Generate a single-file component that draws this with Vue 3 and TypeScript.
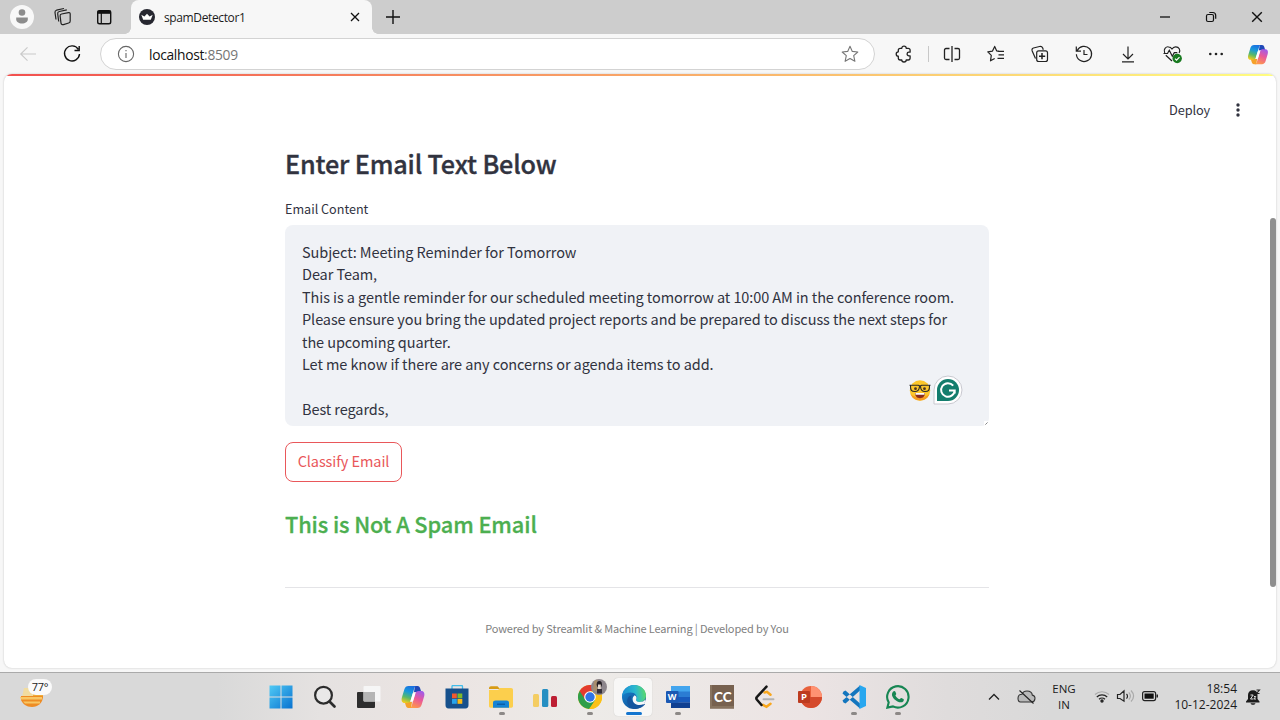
<script setup lang="ts">
const tabTitle: string = 'spamDetector1'
const host: string = 'localhost'
const port: string = ':8509'

const emailLines: string[] = [
  'Subject: Meeting Reminder for Tomorrow',
  'Dear Team,',
  'This is a gentle reminder for our scheduled meeting tomorrow at 10:00 AM in the conference room.',
  'Please ensure you bring the updated project reports and be prepared to discuss the next steps for',
  'the upcoming quarter.',
  'Let me know if there are any concerns or agenda items to add.',
  '\u00a0',
  'Best regards,',
]
</script>

<template>
  <div class="screen">
    <svg class="defs" aria-hidden="true">
      <defs>
        <linearGradient id="cpA" x1="0.6" y1="0" x2="0.3" y2="1">
          <stop offset="0" stop-color="#1b6fe0" /><stop offset="0.35" stop-color="#1799dc" />
          <stop offset="0.68" stop-color="#58b96a" /><stop offset="1" stop-color="#f2cc1c" />
        </linearGradient>
        <linearGradient id="cpB" x1="0.7" y1="0" x2="0.3" y2="1">
          <stop offset="0" stop-color="#a25ae8" /><stop offset="0.45" stop-color="#ea5899" />
          <stop offset="1" stop-color="#ff9a4a" />
        </linearGradient>
        <symbol id="copilot" viewBox="0 0 24 24">
          <path d="M14 1h2.600c1.500 0 2.200.9 2.600 2.400L20.300 7H13z" fill="#2049b8" />
          <path d="M10 23H7.400c-1.500 0-2.200-.9-2.600-2.400L3.700 17H11z" fill="#f5a12a" />
          <path d="M7.500 1h8c-1.300.2-1.900 1.200-2.300 2.600L9.600 15.500C9 17.300 7.900 18 6.300 18H3.600C1 18 0 15.500.9 12.500l2.400-8C4 2 5.400 1 7.500 1z" fill="url(#cpA)" />
          <path d="M16.500 23h-8c1.300-.2 1.900-1.200 2.300-2.600l3.600-11.900C15 6.700 16.100 6 17.700 6h2.700C23 6 24 8.500 23.100 11.500l-2.400 8C20 22 18.600 23 16.500 23z" fill="url(#cpB)" />
          <path d="M11.800 8.300h2.600l-2.500 7.900H9.400z" fill="#fff" />
        </symbol>
      </defs>
    </svg>

    <header class="tabbar">
      <div class="tab-tools">
        <svg class="i24" viewBox="0 0 24 24"><circle cx="12" cy="12" r="12" fill="#f8f8f8" /><circle cx="12" cy="7.500" r="3.300" fill="#8c8c8c" /><path d="M6.200 12.600h11.600v1.600c0 2.600-2.400 4.300-5.800 4.300s-5.800-1.700-5.800-4.300z" fill="#8c8c8c" /></svg>
        <svg class="i24" viewBox="0 0 24 24" fill="none" stroke="#222" stroke-width="1.200" stroke-linejoin="round"><path d="m10.600 9 6.800-1.400c1-.2 1.800.4 1.800 1.400v7c0 1-.5 1.700-1.500 2l-5.200 1.600c-1.200.3-2.300-.3-2.500-1.500l-.9-7.200c-.1-1 .5-1.700 1.500-1.900z" /><path d="m7.700 16.500-1-7.600C6.500 7.600 7.100 6.800 8.300 6.500l7.500-1.600" /><path d="m5 14.500-1-7c-.1-1.200.5-2 1.500-2.300l7.500-1.700" /></svg>
        <svg class="i24" viewBox="0 0 24 24" fill="none" stroke="#111" stroke-width="1.400"><rect x="5.700" y="5.700" width="13" height="13" rx="1.800" /><path d="M5.500 7.200h13.500" stroke-width="3.200" /><path d="M9.300 8v10.500" stroke-width="1.200" /></svg>
      </div>
      <div class="tab">
        <svg class="favicon" viewBox="0 0 16 16"><circle cx="8" cy="8" r="8" fill="#262730" /><path d="M2.300 5.800 5.400 7.600 8 4.700l2.600 2.900 3.100-1.800-1.900 4.900H4.200z" fill="#fff" /></svg>
        <span class="tab-title">{{ tabTitle }}</span>
        <svg class="close" viewBox="0 0 10 10" stroke="#111" stroke-width="1.300"><path d="m1 1 8 8M9 1 1 9" /></svg>
      </div>
      <svg class="plus" viewBox="0 0 14 14" stroke="#111" stroke-width="1.400"><path d="M7 0v14M0 7h14" /></svg>
      <div class="win-buttons">
        <svg class="i24" viewBox="0 0 24 24" stroke="#111" stroke-width="1.300"><path d="M7 12h10" /></svg>
        <svg class="i24" viewBox="0 0 24 24" fill="none" stroke="#111" stroke-width="1.200"><rect x="7.500" y="9.500" width="7" height="7" rx="1.500" /><path d="M10.300 7.500h3.400a3 3 0 0 1 3 3v3.300" /></svg>
        <svg class="i24" viewBox="0 0 24 24" stroke="#111" stroke-width="1.400"><path d="m7.200 7.200 9.600 9.600M16.800 7.200l-9.600 9.600" /></svg>
      </div>
    </header>

    <nav class="toolbar">
      <div class="cell"><svg class="i24" viewBox="0 0 24 24" fill="none" stroke="#c9c9c9" stroke-width="1.100"><path d="M20 12H4.500M11.500 5.300 4.700 12l6.800 6.700" /></svg></div>
      <div class="cell"><svg class="i24" viewBox="0 0 24 24" fill="none" stroke="#111" stroke-width="1.400"><path d="M18.300 7.300A7.500 7.500 0 1 0 19.500 12M19.200 4v4.500h-4.700" /></svg></div>
      <div class="address">
        <svg class="i24" viewBox="0 0 24 24" fill="none" stroke="#666" stroke-width="1.100"><circle cx="12" cy="12" r="7.600" /><path d="M12 11v5M12 8v1.300" /></svg>
        <span class="url"><b>{{ host }}</b>{{ port }}</span>
        <svg class="i24 fav" viewBox="0 0 24 24" fill="none" stroke="#777" stroke-width="1.100" stroke-linejoin="round"><path d="m12 4.300 2.300 5.100 5.500.6-4.100 3.700 1.200 5.600-4.900-2.800-4.900 2.800 1.200-5.600-4.100-3.700 5.500-.6z" /></svg>
      </div>
      <div class="cell"><svg class="i24" viewBox="0 0 24 24" fill="none" stroke="#222" stroke-width="1.300" stroke-linejoin="round"><path d="M8.200 6.300h1.600c0-1.400.9-2.100 2.200-2.100s2.200.7 2.200 2.100h2c1.200 0 1.900.7 1.900 1.900v2h-1.200a1.800 1.800 0 0 0 0 3.600h1.200v2.300c0 1.200-.7 1.900-1.900 1.900h-2c0 1.300-.9 2-2.200 2s-2.200-.7-2.200-2H8.200c-1.200 0-1.900-.7-1.900-1.900v-1.900C4.900 14.200 4.200 13.300 4.200 12s.7-2.200 2.100-2.200V8.200c0-1.200.7-1.900 1.900-1.900z" /></svg></div>
      <span class="divider"></span>
      <div class="cell"><svg class="i24" viewBox="0 0 24 24" fill="none" stroke="#222" stroke-width="1.300"><path d="M9.500 6.500H6a1.500 1.500 0 0 0-1.500 1.500v8A1.500 1.500 0 0 0 6 17.500h3.500M14.500 6.500H18a1.500 1.500 0 0 1 1.500 1.500v8a1.500 1.500 0 0 1-1.500 1.500h-3.500M12 4v16" /></svg></div>
      <div class="cell"><svg class="i24 stars" viewBox="0 0 24 24" fill="none" stroke="#222" stroke-width="1.200" stroke-linejoin="round"><path d="m14 9.200-2.300-.3-2-4.500-2.200 4.700-4.700.7 3.500 3.500-.8 5.500 4.200-2.400M12.500 9.300h6.500M13.500 12.800H19M12.500 16.300H19" /></svg></div>
      <div class="cell"><svg class="i24" viewBox="0 0 24 24" fill="none" stroke="#222" stroke-width="1.200"><path d="M7.500 16.500 4.200 9c-.6-1.500 0-2.500 1.300-3l6-1.500c1.500-.4 2.600.2 3.200 1.500l.6 1.700" /><rect x="8.700" y="8.800" width="10.800" height="10.700" rx="2" /><path d="M14 11v6.300M11 14.200h6.200" stroke-width="1.500" /></svg></div>
      <div class="cell"><svg class="i24" viewBox="0 0 24 24" fill="none" stroke="#222" stroke-width="1.200"><path d="M5.200 8.500a7.600 7.600 0 1 1-.8 3.700M4.300 4.500v4.700H9M12 8v4.500h3.500" /></svg></div>
      <div class="cell"><svg class="i24" viewBox="0 0 24 24" fill="none" stroke="#222" stroke-width="1.200"><path d="M12 4.500v12M7 12l5 5 5-5M6 19.800h12" /></svg></div>
      <div class="cell"><svg class="i24" viewBox="0 0 24 24" fill="none" stroke="#222" stroke-width="1.200"><path d="M12 19 5.800 13.200M4.700 11C3 7 6 4.500 8.500 4.800c1.800.1 2.800 1.100 3.500 2.200.8-1.200 1.800-2.100 3.500-2.200 3.500-.2 5.300 3.300 3.600 6.200M3.500 11.500h4l1.800-3.300 3 6 2-3.500h3" /><circle cx="17.200" cy="16.500" r="4.700" fill="#197a20" stroke="none" /><path d="m15 16.600 1.500 1.500 3-3" stroke="#fff" /></svg></div>
      <div class="cell"><svg class="i24" viewBox="0 0 24 24" fill="#222"><circle cx="6.300" cy="12" r="1.300" /><circle cx="12" cy="12" r="1.300" /><circle cx="17.700" cy="12" r="1.300" /></svg></div>
      <div class="cell cop"><svg class="copilot-top"><use href="#copilot" /></svg></div>
    </nav>

    <main class="viewport">
      <div class="decoration"></div>
      <div class="app-header">
        <span>Deploy</span>
        <svg class="kebab" viewBox="0 0 4 14" fill="#31333f"><circle cx="2" cy="2" r="1.700" /><circle cx="2" cy="7" r="1.700" /><circle cx="2" cy="12" r="1.700" /></svg>
      </div>
      <div class="content">
        <h2 class="heading">Enter Email Text Below</h2>
        <div class="label">Email Content</div>
        <div class="textarea">
          <div v-for="(line, i) in emailLines" :key="i" class="line">{{ line }}</div>
          <div class="extension">
            <svg class="emoji" viewBox="0 0 22 22"><circle cx="11" cy="11.500" r="10.200" fill="#fcc62b" /><path d="M1.500 15a10.200 10.200 0 0 0 19 0 15 15 0 0 1-19 0z" fill="#f59b22" /><circle cx="6.500" cy="9.700" r="1.400" fill="#4b3520" /><circle cx="15.500" cy="9.700" r="1.400" fill="#4b3520" /><path d="M.5 6.300h8.800l1.700.8 1.700-.8h8.800M1.500 6.500c-.2 5 1 6 4.500 6s4.200-1.500 4.400-4.500h1.200c.2 3 .9 4.500 4.400 4.500s4.700-1 4.500-6" fill="none" stroke="#292929" stroke-width="1.100" /><path d="M6 14h10c0 3.300-2 5.200-5 5.200S6 17.300 6 14z" fill="#8b2a1c" /><path d="M6.500 14h9v1.800h-9z" fill="#fff" /></svg>
            <svg class="grammarly" viewBox="0 0 30 30"><path d="M1 29V15A14 14 0 1 1 15 29z" fill="#fff" stroke="#c8c8cf" stroke-width="1" /><path d="M4 26V15a11 11 0 1 1 11 11z" fill="#137d6d" /><path d="M20.200 10.700A6.800 6.800 0 1 0 21.700 15.500H16M21.700 15.500v3" fill="none" stroke="#fff" stroke-width="2" /></svg>
          </div>
          <svg class="resize" viewBox="0 0 5 5" stroke="#444" stroke-width="0.800"><path d="M0 0h5v5H0z" fill="#fff" stroke="none" /><path d="m1 4 3-3M3 4.500 4.500 3" /></svg>
        </div>
        <button class="classify">Classify Email</button>
        <h3 class="result">This is Not A Spam Email</h3>
        <hr class="rule" />
        <p class="footer">Powered by Streamlit &amp; Machine Learning | Developed by You</p>
      </div>
      <div class="scrollbar"></div>
    </main>

    <footer class="taskbar">
      <div class="weather">
        <svg class="boat" viewBox="0 0 24 22"><path d="M4 2h10v9H2z" fill="#f1dca0" /><path d="M13 7h10v5H13z" fill="#f0ac36" /><path d="M1 10h22c0 7-5 11-11 11S3 18 1 14z" fill="#ee8c24" /><path d="M0 11h22v2.500H1zM3 15.500h17v2H5z" fill="#f8c765" /></svg>
        <span class="temp">77°</span>
      </div>
      <div class="apps">
        <div class="app"><svg class="i24" viewBox="0 0 24 24"><defs><linearGradient id="win" x1="0" y1="0" x2="1" y2="1"><stop stop-color="#50caf5" /><stop offset="1" stop-color="#0872d0" /></linearGradient></defs><path d="M.5.500h11v11H.5zM12.500.500h11v11h-11zM.5 12.500h11v11H.5zM12.500 12.500h11v11h-11z" fill="url(#win)" /></svg></div>
        <div class="app"><svg class="i24" viewBox="0 0 24 24" fill="none" stroke="#2c2c2c"><circle cx="10.500" cy="10.200" r="8.400" stroke-width="2.200" fill="#e9e8e8" /><path d="m16.500 16.500 5 5" stroke-width="2.700" stroke-linecap="round" /></svg></div>
        <div class="app"><svg class="i24" viewBox="0 0 24 24"><rect x="0" y="7" width="18" height="16" rx="1" fill="#2d2d2d" /><rect x="6.500" y="1" width="17" height="15.500" rx="1" fill="#f6f6f6" /><path d="M6.500 7H18v9.500H7.500a1 1 0 0 1-1-1z" fill="#b5b5b5" /></svg></div>
        <div class="app"><svg class="i24"><use href="#copilot" /></svg></div>
        <div class="app"><svg class="i24" viewBox="0 0 24 24"><path d="M7 5V1.500c0-.6.400-1 1-1h8.500c.6 0 1 .4 1 1V5" fill="none" stroke="#42bdea" stroke-width="1.300" /><path d="M.5 3.500h23V20c0 2-1 3.500-3 3.500h-17C1.500 23.500.5 22 .5 20z" fill="#16508c" /><path d="M7 8.500h4.800v4.800H7z" fill="#f1582e" /><path d="M12.500 8.500h4.800v4.800h-4.800z" fill="#7eba2a" /><path d="M7 14h4.800v4.800H7z" fill="#27a4eb" /><path d="M12.500 14h4.800v4.800h-4.800z" fill="#fdb913" /></svg></div>
        <div class="app"><svg class="i24" viewBox="0 0 24 24"><path d="M0 3.200C0 2 .8 1.200 2 1.200h6.500L11 4H0z" fill="#d79b14" /><path d="M0 5h9l2-2h11c1.300 0 2 .7 2 2v16c0 1-.7 1.700-1.700 1.700H1.700C.7 22.700 0 22 0 21z" fill="#fccf4d" /><path d="M4 22.700V18c0-1.700.8-2.500 2.500-2.500h11c1.700 0 2.500.8 2.500 2.500v4.700z" fill="#1683d4" /><path d="M8 19.200h8" stroke="#0b559d" stroke-width="1.200" /></svg><i class="dot"></i></div>
        <div class="app"><svg class="i24" viewBox="0 0 24 24"><rect x="0" y="9" width="6" height="13" rx="1.500" fill="#f4cd63" /><rect x="9" y="4" width="6.300" height="18" rx="1.500" fill="#268fc2" /><rect x="18" y="11" width="6" height="11" rx="1.500" fill="#bd1f33" /></svg></div>
        <div class="app"><svg class="i24" viewBox="0 0 24 24"><circle cx="12" cy="12" r="12" fill="#fbc116" /><path d="M12 12 1.600 6A12 12 0 0 0 11 24l6.300-9z" fill="#2f9e49" /><path d="M1.600 6a12 12 0 0 1 20.800 0H12l-4.500 9z" fill="#e33b2e" /><path d="M12 24a12 12 0 0 0 10.400-18H12l5.200 9z" fill="#fbc116" /><circle cx="12" cy="12" r="5.800" fill="#fff" /><circle cx="12" cy="12" r="4.700" fill="#2f74e6" /></svg>
          <svg class="profile" viewBox="0 0 16 16"><circle cx="8" cy="8" r="8" fill="#8d868c" /><path d="M3 2 6.500.5v12L2 11z" fill="#a88d6c" /><ellipse cx="8.300" cy="5.300" rx="2.600" ry="3.300" fill="#241e24" /><path d="M7 5.500h2.800v4.500H7z" fill="#e6d8cc" /><path d="M6 10h5v4.500H6z" fill="#35313a" /></svg><i class="dot"></i></div>
        <div class="app active"><svg class="i24" viewBox="0 0 24 24"><defs><linearGradient id="edA" x1="0" y1=".3" x2="1" y2=".2"><stop stop-color="#1b8fd4" /><stop offset=".55" stop-color="#2bb8cf" /><stop offset="1" stop-color="#5fdc62" /></linearGradient><linearGradient id="edB" x1="0" y1="0" x2="1" y2="1"><stop stop-color="#178bd8" /><stop offset="1" stop-color="#113f83" /></linearGradient></defs><circle cx="12" cy="12" r="12" fill="url(#edB)" /><path d="M0 11.500C.5 5 5.600 0 12 0c7 0 12 5 12 10.500 0 4-2.700 6.500-6 6.500-3.500 0-4.600-1.500-3.800-3 1.500-3-1-6.500-5.500-6.500C4.500 7.500 1.500 9 0 11.500z" fill="url(#edA)" /><path d="M9.500 10.500c-1.500 5 2.500 10 8 10 2 0 3.400-.5 4.800-1.400.6-.3 1-.1.600.5C21 22.200 17 24 13.500 24 7 23.500 4.500 18 5.300 14.500c.5-2.200 2-3.500 4.200-4z" fill="#15569f" /><path d="M14.300 13.800c-1 1.700.5 3.200 3.700 3.200 2.200 0 3.900-.8 5-2.200l.5 1.200-1.500 3c-5 2.300-10.500.7-11.300-4-.3-2 .5-3.800 2-4.800 1.500.7 2.100 2.300 1.600 3.600z" fill="#f7f8f9" /></svg><i class="dot wide"></i></div>
        <div class="app"><svg class="i24" viewBox="0 0 24 24"><path d="M5 1h19v6H5z" fill="#43a5ee" /><path d="M5 6.500h19v6H5z" fill="#2b7cd3" /><path d="M5 12h19v5.700H5z" fill="#185abd" /><path d="M5 17.500h19V23H5z" fill="#103f91" /><rect x="0" y="6" width="12.500" height="12" rx="1" fill="#1b58b3" /><text x="6.200" y="15.300" text-anchor="middle" class="glyph w">W</text></svg><i class="dot"></i></div>
        <div class="app"><svg class="i24" viewBox="0 0 24 24"><path d="M0 0h24v23.500H0z" fill="#77614f" /><path d="M0 17V0h2v21h22v2.500H0z" fill="#87735f" /><text x="12.800" y="16.800" text-anchor="middle" class="glyph cc">CC</text></svg></div>
        <div class="app"><svg class="i24" viewBox="0 0 24 24" fill="none" stroke-linecap="round" stroke-width="2.500"><path d="m10.500 7.500 2.500-.7 3.500 3M9 19.800l3.500 2 4-3" stroke="#f9a71d" /><path d="M12.500 1.700 3 11.800c-1 1-.8 2 0 3l4.500 5.200" stroke="#171717" /><path d="M9.500 14.200h10" stroke="#b2b2b2" stroke-width="1.900" /></svg></div>
        <div class="app"><svg class="i24" viewBox="0 0 24 24"><circle cx="13" cy="12" r="11" fill="#e8603b" /><path d="M13 1a11 11 0 0 1 11 11H13z" fill="#ff9272" /><path d="M2 12h22a11 11 0 0 1-22 0z" fill="#d54a2c" /><rect x="0" y="6" width="12" height="12" rx="1" fill="#bd3b1f" /><text x="6" y="15.200" text-anchor="middle" class="glyph p">P</text></svg></div>
        <div class="app"><svg class="i24" viewBox="0 0 24 24"><path d="m1.500 6.500 2-1 14.500 13v5L.5 8.500zM1.500 17.500l2 1L18 5.500v-5L.5 15.500z" fill="#1476be" /><path d="M17.500 0 24 3v18l-6.500 3z" fill="#29a7ef" /></svg><i class="dot"></i></div>
        <div class="app"><svg class="i24" viewBox="0 0 24 24"><path d="m1.400 22.600 1.300-5.200A10.700 10.700 0 1 1 7 21.400z" fill="none" stroke="#178653" stroke-width="2.100" /><path d="M7 6.800c1-1.200 2-.9 2.400 0l.8 2c.2.600-.8 1.400-.8 1.700.9 1.900 2.300 3 4.200 3.800.5-.2 1.200-1.600 1.800-1.300l2 1c.8.400.5 1.600-.2 2.400-1.200 1.200-3.200 1.300-5.700 0-3-1.500-6-5-5.500-7.500.1-.9.500-1.600 1-2.100z" fill="#178653" /></svg><i class="dot"></i></div>
      </div>
      <div class="tray">
        <svg class="i24" viewBox="0 0 24 24" fill="none" stroke="#222" stroke-width="1.300"><path d="m7 14.500 5-5 5 5" /></svg>
        <svg class="i24 cloud" viewBox="0 0 24 24" fill="#b9b9b9" stroke="#333" stroke-width="1.100"><path d="M6.500 17h11a3.500 3.500 0 0 0 .8-6.900C18 7 15.500 6 13 6c-2.500 0-4.300 1-5 3.300-2.700 0-4 1.500-4 4C4 15.500 5 17 6.500 17z" /><path d="m5.500 5.500 14 13" stroke="#222" /></svg>
        <div class="lang"><span>ENG</span><span>IN</span></div>
        <svg class="i24 wifi" viewBox="0 0 24 24" fill="none" stroke="#222" stroke-width="1.200"><path d="M5 9.500a10.300 10.300 0 0 1 14 0" stroke="#aaa" /><path d="M6.800 12a7.500 7.500 0 0 1 10.400 0M9 14.300a4.300 4.300 0 0 1 6 0" /><circle cx="12" cy="16" r="1.100" fill="#222" /></svg>
        <svg class="i24 vol" viewBox="0 0 24 24" fill="none" stroke="#222" stroke-width="1.200"><path d="M4.500 9.500H7l4-3.700v10.400L7 13.500H4.500zM13.500 9c1.300 1.200 1.300 3.400 0 4.600" /><path d="M15.800 7.300c2 2.300 2 5.100 0 7.400M18 5.500c3.200 3.400 3.200 7.600 0 11" stroke="#aaa" /></svg>
        <svg class="i24 bat" viewBox="0 0 24 24"><rect x="4.600" y="6.600" width="13" height="9" rx="2" fill="none" stroke="#222" stroke-width="1.200" /><rect x="6.500" y="8.500" width="9.200" height="5.200" fill="#111" /><path d="M18.500 9.500h1.500v3h-1.500z" fill="#222" /></svg>
        <div class="clock"><span>18:54</span><span>10-12-2024</span></div>
        <svg class="bell" viewBox="0 0 16 16"><path d="M3 6C3 3 5 1.200 8 1.200c3 0 4.500 2 4.500 4.800v4l2 2.500v1H1v-1L3 10zM5.500 14.300h5c-.5 1-1.300 1.500-2.500 1.500s-2-.5-2.500-1.500z" fill="#1b1b1b" /><path d="M5.500 6h2.700l-2.700 4h3M9 7.500h1.700L9 10h2" fill="none" stroke="#ddd" stroke-width="1" /><path d="M11.500 1h3l-3 3.500h3" fill="none" stroke="#222" stroke-width="1.100" /></svg>
      </div>
    </footer>
  </div>
</template>

<style>
body { margin: 0; overflow: hidden; }
</style>

<style scoped>
* { box-sizing: border-box; }
.screen { width: 1280px; height: 720px; display: flex; flex-direction: column; background: #f7f7f7; font-family: "Open Sans", "Noto Sans", sans-serif; color: #1b1b1b; overflow: hidden; }
.defs { position: absolute; width: 0; height: 0; }
svg { display: block; flex: none; }
.i24 { width: 24px; height: 24px; }
.tabbar { height: 34px; background: #cdcdcd; display: flex; align-items: center; flex: none; }
.tab-tools { width: 131px; padding-left: 10px; display: flex; gap: 17px; height: 34px; align-items: center; }
.tab { width: 241px; height: 34px; background: #f7f7f7; border-radius: 8px 8px 0 0; display: flex; align-items: center; padding: 0 12px 0 8px; position: relative; }
.tab::before, .tab::after { content: ""; position: absolute; bottom: 0; width: 6px; height: 6px; }
.tab::before { left: -6px; background: radial-gradient(circle at 0 0, #cdcdcd 5.500px, #f7f7f7 6px); }
.tab::after { right: -6px; background: radial-gradient(circle at 100% 0, #cdcdcd 5.500px, #f7f7f7 6px); }
.favicon { width: 16px; height: 16px; }
.tab-title { font-size: 12px; margin-left: 9px; letter-spacing: -0.370px; line-height: 18px; padding-top: 1px; }
.close { width: 10px; height: 10px; margin-left: auto; }
.plus { width: 14px; height: 14px; margin-left: 14px; }
.win-buttons { margin-left: auto; display: flex; gap: 22px; padding-right: 11px; }
.toolbar { height: 40px; flex: none; display: flex; align-items: center; padding-left: 6px; }
.cell { width: 44px; display: flex; justify-content: center; flex: none; }
.cell.cop { width: 40px; }
.stars { margin-left: 1px; }
.copilot-top { width: 22px; height: 21px; }
.address { width: 775px; height: 32px; margin: 0 7px 0 6px; border: 1px solid #d3d3d3; border-radius: 16px; background: #fff; display: flex; align-items: center; padding: 0 12px 0 13px; flex: none; }
.url { margin-left: 11px; font-size: 13.800px; line-height: 20px; color: #767676; letter-spacing: -0.300px; padding-top: 1px; }
.url b { font-weight: 400; color: #111; }
.fav { margin-left: auto; }
.divider { width: 1px; height: 16px; background: #c8c8c8; margin: 0 1px 0 2px; }
.viewport { position: relative; width: 1272px; height: 594px; margin: 0 4px; flex: none; background: #fff; border-radius: 8px; overflow: hidden; box-shadow: 0 0 2px #bdbdbd; font-family: "Noto Sans CJK SC", sans-serif; color: #31333f; }
.decoration { height: 2px; background: linear-gradient(90deg, #f2504f, #fffd80); }
.app-header { height: 68px; display: flex; justify-content: flex-end; align-items: center; padding-right: 36px; gap: 26px; font-size: 12.800px; }
.app-header span { margin-top: -2px; letter-spacing: -0.150px; }
.kebab { width: 4px; height: 14px; }
.content { width: 704px; margin-left: 281px; display: flex; flex-direction: column; align-items: flex-start; white-space: nowrap; }
.heading { margin: 1px 0 0; font-size: 25.200px; line-height: 36px; height: 36px; font-weight: 500; letter-spacing: -0.150px; -webkit-text-stroke: 0.350px #31333f; }
.label { font-size: 12.600px; line-height: 20px; margin-top: 18px; height: 20px; }
.textarea { position: relative; width: 704px; height: 201px; margin-top: 6px; border-radius: 8px; background: #f0f2f6; padding: 16px 17px; font-size: 14.500px; line-height: 22.400px; letter-spacing: -0.085px; overflow: hidden; }
.line { height: 22.400px; }
.extension { position: absolute; right: 26px; bottom: 21px; display: flex; align-items: center; gap: 2px; }
.emoji { width: 22px; height: 22px; }
.grammarly { width: 30px; height: 30px; }
.resize { position: absolute; right: 0; bottom: 0; width: 5px; height: 5px; }
.classify { margin-top: 16px; width: 117px; height: 40px; border: 1px solid #e9575a; border-radius: 8px; background: #fff; color: #e9575a; font: 400 14.500px/22px "Noto Sans CJK SC", sans-serif; letter-spacing: -0.080px; padding: 0 0 2px; text-align: center; }
.result { margin: 25px 0 0; color: #4caf50; font-size: 21.800px; font-weight: 500; line-height: 34px; height: 34px; letter-spacing: -0.120px; -webkit-text-stroke: 0.300px #4caf50; }
.rule { width: 704px; height: 1px; border: 0; background: #e4e4e7; margin: 46px 0 0; }
.footer { align-self: center; margin: 31px 0 0; font-size: 11px; line-height: 18px; color: #808080; letter-spacing: -0.140px; }
.scrollbar { position: absolute; right: 0; top: 144px; width: 6px; height: 369px; border-radius: 3px; background: #8e8e8e; }
.taskbar { height: 48px; margin-top: 4px; flex: none; display: grid; grid-template-columns: 259px 661px 360px; border-top: 1px solid #aaa; background: linear-gradient(90deg, #d9d9d9 0%, #d9d9d9 17%, #e5e2e1 25%, #ebe4e2 34%, #edebe8 46%, #ece4e4 63%, #dfdcdc 74%, #d9d9d9 82%); }
.weather { padding: 13px 0 0 20px; position: relative; }
.boat { width: 24px; height: 22px; }
.temp { position: absolute; left: 28px; top: 6px; width: 24px; height: 16px; border-radius: 8px; background: #fafafa; font-size: 11px; line-height: 16px; text-align: center; letter-spacing: -0.300px; }
.apps { display: grid; grid-template-columns: repeat(15, 44.060px); }
.app { position: relative; height: 47px; padding: 12px 0 0 10.200px; }
.active::before { content: ""; position: absolute; left: 3px; top: 5px; width: 38px; height: 38px; border-radius: 4px; background: #f8f7f6; box-shadow: 0 0 1px #bbb; }
.active svg { position: relative; }
.dot { position: absolute; left: 19.400px; top: 39px; width: 6px; height: 3px; border-radius: 2px; background: #8c8886; }
.dot.wide { left: 14.400px; width: 16px; background: #1475cf; }
.profile { position: absolute; width: 16px; height: 16px; left: 23.500px; top: 6px; }
.glyph { font-family: "Open Sans", sans-serif; font-weight: 700; fill: #fff; }
.w { font-size: 9px; }
.p { font-size: 9.500px; }
.cc { font-family: Lato, sans-serif; font-weight: 900; font-size: 13.500px; }
.tray { display: flex; align-items: center; padding-left: 62px; font-size: 12px; }
.cloud { margin-left: 8px; }
.lang { margin-left: 14px; width: 24px; display: flex; flex-direction: column; align-items: center; line-height: 15.500px; font-size: 11.500px; }
.wifi { margin-left: 14px; }
.vol { margin-left: -1px; }
.bat { margin-left: 1px; }
.clock { width: 75px; display: flex; flex-direction: column; align-items: flex-end; line-height: 15.500px; font-size: 12px; }
.bell { width: 16px; height: 16px; margin-left: 8px; }
</style>
